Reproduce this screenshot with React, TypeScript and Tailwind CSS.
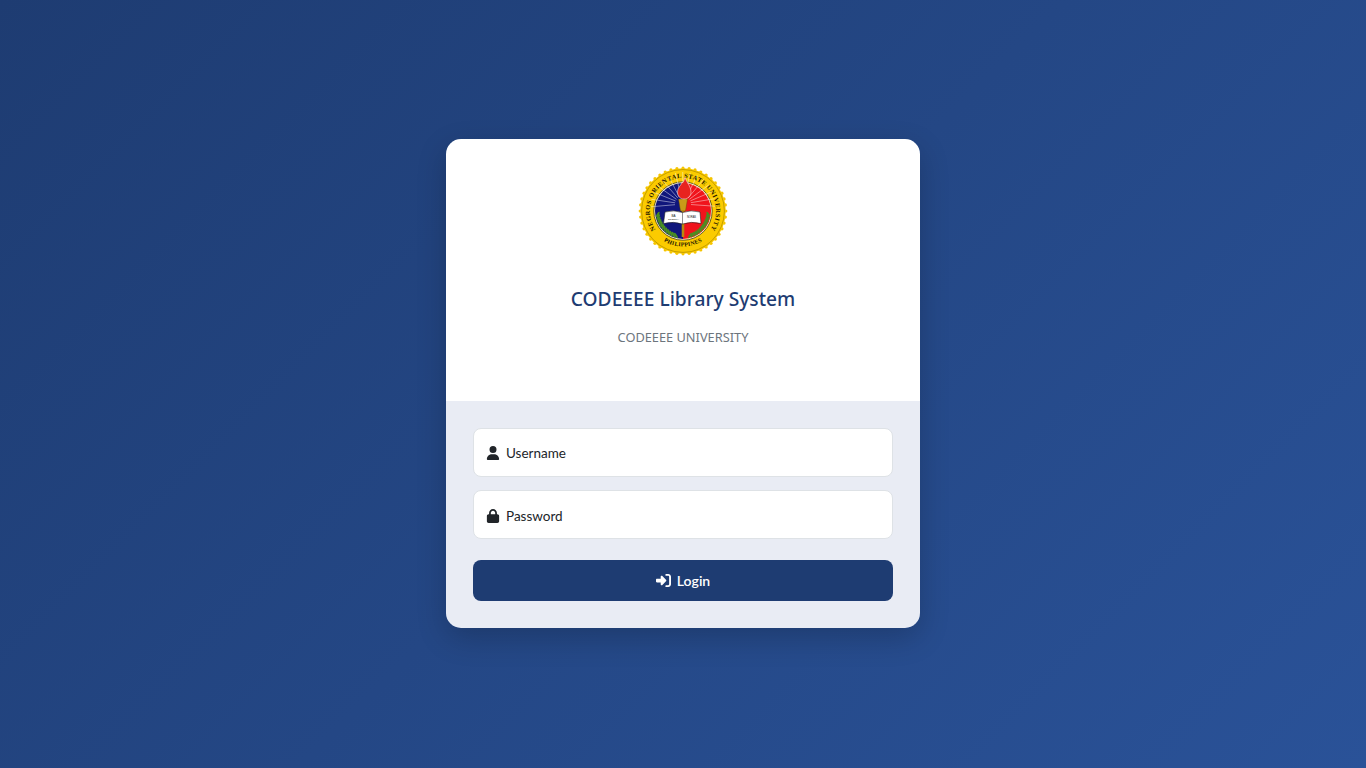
import { FaLock, FaRightToBracket, FaUser } from "react-icons/fa6";

const polar = (r: number, deg: number, cx = 45, cy = 45) => ({
  x: cx + r * Math.cos((deg * Math.PI) / 180),
  y: cy + r * Math.sin((deg * Math.PI) / 180),
});

const SealLogo = () => {
  const scallops = Array.from({ length: 44 }, (_, i) => (i * 360) / 44);
  const rays = Array.from({ length: 15 }, (_, i) => 175 + i * 13.5);
  const leaves = Array.from({ length: 12 }, (_, i) => 8 + i * 6);
  return (
    <svg viewBox="0 0 90 90" className="w-[90px] h-[90px] block">
      <defs>
        <path id="sealTop" d="M 21.6 68.4 A 33.1 33.1 0 1 1 68.4 68.4" />
        <path id="sealBottom" d="M 11 58 A 37 37 0 0 0 79 58" />
      </defs>
      {scallops.map((a) => {
        const p = polar(42.8, a);
        return <circle key={a} cx={p.x} cy={p.y} r="1.6" fill="#f5c400" />;
      })}
      <circle cx="45" cy="45" r="42.8" fill="#fbcb00" />
      <circle cx="45" cy="45" r="41.4" fill="none" stroke="#8a6f00" strokeWidth="0.5" />
      <circle cx="45" cy="45" r="29.2" fill="#fff6c8" stroke="#2b2400" strokeWidth="0.7" />
      <path d="M45 17 A28 28 0 0 0 45 73 Z" fill="#10167c" />
      <path d="M45 17 A28 28 0 0 1 45 73 Z" fill="#f0141c" />
      {rays.map((a) => {
        const from = polar(8, a, 45, 38);
        const to = polar(32, a, 45, 38);
        return (
          <line key={a} x1={from.x} y1={from.y} x2={to.x} y2={to.y} stroke="#fff" strokeWidth="0.5" opacity="0.9" />
        );
      })}
      {/* wreath */}
      {leaves.map((a) => {
        const left = polar(25.5, 180 - a, 45, 45);
        const right = polar(25.5, a, 45, 45);
        return (
          <g key={a}>
            <ellipse cx={left.x} cy={left.y} rx="3.2" ry="1.1" fill="#4a8f22" transform={`rotate(${-a - 50} ${left.x} ${left.y})`} />
            <ellipse cx={right.x} cy={right.y} rx="3.2" ry="1.1" fill="#4a8f22" transform={`rotate(${a + 50} ${right.x} ${right.y})`} />
          </g>
        );
      })}
      {/* torch */}
      <rect x="43.7" y="44" width="2.6" height="27" fill="#b8890f" />
      <path d="M40.5 33 H49.5 L47.5 45 H42.5 Z" fill="#c99a18" stroke="#5a4500" strokeWidth="0.4" />
      <path d="M47 11 C48 16 53 20 53 26 C53 30 50 33 46 33 C42 33 39.5 30 39.5 26 C39.5 21 43 20 44 16 C45 18 46 15 47 11 Z" fill="#e8231f" stroke="#fff" strokeWidth="0.5" />
      {/* open book */}
      <path d="M27 46 Q36 43.5 44.5 46.5 Q53 43.5 62 46 L63 57.5 Q53 55 44.5 58 Q36 55 25.5 57.5 Z" fill="#fff" stroke="#222" strokeWidth="0.6" />
      <line x1="44.5" y1="46.5" x2="44.5" y2="58" stroke="#222" strokeWidth="0.5" />
      <text x="35.5" y="50.5" textAnchor="middle" fontSize="3" fontFamily="'Liberation Sans', sans-serif" fill="#111">BA</text>
      <text x="35.5" y="54" textAnchor="middle" fontSize="2.4" fontFamily="'Liberation Sans', sans-serif" fill="#111">SCIENTIA</text>
      <text x="53.5" y="52" textAnchor="middle" fontSize="2.6" fontFamily="'Liberation Sans', sans-serif" fill="#111">NORAS</text>
      <text fontSize="6.4" fontWeight="700" fontFamily="'Liberation Serif', serif" fill="#1a1400" letterSpacing="0.55">
        <textPath href="#sealTop" startOffset="50%" textAnchor="middle">
          NEGROS ORIENTAL STATE UNIVERSITY
        </textPath>
      </text>
      <text fontSize="5.8" fontWeight="700" fontFamily="'Liberation Serif', serif" fill="#1a1400" letterSpacing="0.3">
        <textPath href="#sealBottom" startOffset="50%" textAnchor="middle">
          PHILIPPINES
        </textPath>
      </text>
    </svg>
  );
};

const fields = [
  { icon: <FaUser className="w-[14px] h-[14px]" />, placeholder: "Username", type: "text", nudge: "pt-px" },
  { icon: <FaLock className="w-[14px] h-[14px]" />, placeholder: "Password", type: "password", nudge: "pt-[3px]" },
];

export default function App() {
  return (
    <div className="min-h-screen pb-px flex items-center justify-center bg-[linear-gradient(135deg,#1e3c72,#2a5298)] font-['Lato','Noto_Sans',sans-serif]">
      <div className="w-[474px] rounded-[15px] overflow-hidden shadow-[0_10px_30px_rgba(0,0,0,0.2)]">
        <div className="bg-white h-[262px] pt-[27px] flex flex-col items-center font-['Noto_Sans',sans-serif]">
          <SealLogo />
          <h1 className="mt-[29px] text-[19.2px] leading-[28px] font-medium text-[#1e3c72]">
            CODEEEE Library System
          </h1>
          <p className="mt-[14px] text-[12.8px] leading-[20px] text-[#6c757d]">CODEEEE UNIVERSITY</p>
        </div>
        <form className="bg-[#e9ecf4] h-[227px] p-[27px] flex flex-col">
          {fields.map((field) => (
            <label
              key={field.placeholder}
              className={`h-[49px] mb-[13px] flex items-center gap-[6px] pl-[12px] bg-white border border-[#dee2e6] rounded-[8px] ${field.nudge}`}
            >
              <span className="text-[#212529]">{field.icon}</span>
              <input
                type={field.type}
                placeholder={field.placeholder}
                className="flex-1 outline-none bg-transparent text-[13.5px] text-[#212529] placeholder:text-[#212529]"
              />
            </label>
          ))}
          <button
            type="button"
            className="mt-[8px] h-[41px] flex items-center justify-center gap-[6px] rounded-[8px] bg-[#1e3c72] text-white text-[14px] font-semibold"
          >
            <FaRightToBracket className="w-[15px] h-[15px]" />
            Login
          </button>
        </form>
      </div>
    </div>
  );
}
